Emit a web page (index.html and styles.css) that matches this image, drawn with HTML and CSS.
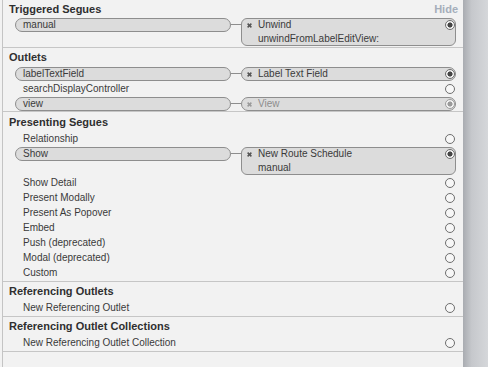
FILE: index.html
```html
<!DOCTYPE html>
<html lang="en">
<head>
    <meta charset="utf-8" />
    <link rel="stylesheet" href="styles.css">
    <title>Connections Inspector</title>
</head>
<body>
    <div class="inspector">
        <div class="panel">

            <section class="group group-triggered">
                <div class="group-head"><span>Triggered Segues</span><span class="hide">Hide</span></div>
                <div class="row row-double">
                    <span class="pill">manual</span><span class="wire"></span>
                    <div class="target target-double">
                        <div class="target-line"><svg class="x" width="5" height="5" viewBox="0 0 5 5"><path d="M0.6 0.6L4.4 4.4M4.4 0.6L0.6 4.4"/></svg><span class="target-name">Unwind</span><span class="radio on"></span></div>
                        <div class="target-sub">unwindFromLabelEditView:</div>
                    </div>
                </div>
            </section>

            <section class="group group-outlets">
                <div class="group-head"><span>Outlets</span></div>
                <div class="row row-linked">
                    <span class="pill">labelTextField</span><span class="wire"></span>
                    <div class="target"><div class="target-line"><svg class="x" width="5" height="5" viewBox="0 0 5 5"><path d="M0.6 0.6L4.4 4.4M4.4 0.6L0.6 4.4"/></svg><span class="target-name">Label Text Field</span><span class="radio on"></span></div></div>
                </div>
                <div class="row"><span class="name">searchDisplayController</span><span class="radio"></span></div>
                <div class="row row-linked">
                    <span class="pill">view</span><span class="wire"></span>
                    <div class="target dim"><div class="target-line"><svg class="x" width="5" height="5" viewBox="0 0 5 5"><path d="M0.6 0.6L4.4 4.4M4.4 0.6L0.6 4.4"/></svg><span class="target-name">View</span><span class="radio on"></span></div></div>
                </div>
            </section>

            <section class="group group-presenting">
                <div class="group-head"><span>Presenting Segues</span></div>
                <div class="row"><span class="name">Relationship</span><span class="radio"></span></div>
                <div class="row row-double">
                    <span class="pill">Show</span><span class="wire"></span>
                    <div class="target target-double">
                        <div class="target-line"><svg class="x" width="5" height="5" viewBox="0 0 5 5"><path d="M0.6 0.6L4.4 4.4M4.4 0.6L0.6 4.4"/></svg><span class="target-name">New Route Schedule</span><span class="radio on"></span></div>
                        <div class="target-sub">manual</div>
                    </div>
                </div>
                <div class="row"><span class="name">Show Detail</span><span class="radio"></span></div>
                <div class="row"><span class="name">Present Modally</span><span class="radio"></span></div>
                <div class="row"><span class="name">Present As Popover</span><span class="radio"></span></div>
                <div class="row"><span class="name">Embed</span><span class="radio"></span></div>
                <div class="row"><span class="name">Push (deprecated)</span><span class="radio"></span></div>
                <div class="row"><span class="name">Modal (deprecated)</span><span class="radio"></span></div>
                <div class="row"><span class="name">Custom</span><span class="radio"></span></div>
            </section>

            <section class="group">
                <div class="group-head"><span>Referencing Outlets</span></div>
                <div class="row"><span class="name">New Referencing Outlet</span><span class="radio"></span></div>
            </section>

            <section class="group">
                <div class="group-head"><span>Referencing Outlet Collections</span></div>
                <div class="row"><span class="name">New Referencing Outlet Collection</span><span class="radio"></span></div>
            </section>

        </div>
        <div class="strip"></div>
    </div>
</body>
</html>
```

FILE: styles.css
```css
body {
    margin: 0;
    background-color: #f2f2f2;
    font-family: 'Liberation Sans', Arial, sans-serif;
    color: #3a3a3a;
}

.inspector {
    display: flex;
    height: 367px;
}

.panel {
    width: 460px;
    margin-left: 2px;
    border-left: 1px solid #c4c4c4;
    background-color: #f2f2f2;
}

.strip {
    flex: 1;
    background: linear-gradient(to right, #a9acb1, #c6c8cc 35%, #d5d7da);
}

/* sections */
.group {
    padding: 2px 0 1px;
    border-bottom: 1px solid #c6c6c6;
}

.group-outlets { padding-bottom: 0; }
.group-presenting { padding-top: 3px; }

.group-head {
    display: flex;
    justify-content: space-between;
    height: 13px;
    line-height: 15px;
    padding: 0 5px 0 6px;
    margin-bottom: 3px;
    font-size: 11px;
    font-weight: bold;
    color: #2f2f2f;
}

.group-triggered .group-head { margin-bottom: 2px; }

.hide {
    color: #a5aebb;
}

/* rows */
.row {
    display: grid;
    grid-template-columns: 12px 216px 10px 215px;
    align-items: center;
    height: 15px;
    font-size: 10px;
}

.row-linked,
.row-double {
    align-items: start;
    padding-top: 1px;
    box-sizing: border-box;
}

.row-double { height: 29px; }

.name {
    grid-column: 2;
    padding-left: 8px;
    line-height: 16px;
    white-space: nowrap;
}

.row > .radio {
    grid-column: 4;
    justify-self: end;
    margin-right: 1px;
}

.pill {
    grid-column: 2;
    height: 14px;
    box-sizing: border-box;
    border: 1px solid #8e8e8e;
    border-radius: 7px;
    background-color: #dcdcdc;
    padding-left: 7px;
    line-height: 12px;
    white-space: nowrap;
}

.wire {
    grid-column: 3;
    height: 1px;
    margin-top: 6px;
    background-color: #8e8e8e;
}

.target {
    grid-column: 4;
    height: 14px;
    box-sizing: border-box;
    border: 1px solid #8e8e8e;
    border-radius: 7px;
    background-color: #dcdcdc;
    padding-left: 5px;
}

.target-double {
    height: 28px;
    border-radius: 6px;
}

.target-line {
    display: flex;
    align-items: center;
    height: 12px;
    line-height: 12px;
}

.target-name {
    flex: 1;
    white-space: nowrap;
}

.target-sub {
    padding: 1px 0 0 11px;
    line-height: 13px;
}

.x {
    flex: none;
    margin-right: 6px;
    stroke: #555555;
    stroke-width: 1.5;
}

.dim .target-name { color: #8d8d8d; }
.dim .x { stroke: #9a9a9a; }

/* radio buttons */
.radio {
    flex: none;
    width: 10px;
    height: 10px;
    box-sizing: border-box;
    border: 1px solid #6e6e6e;
    border-radius: 50%;
    background-color: #f7f7f7;
}

.target .radio { margin-right: 0; }

.radio.on {
    background: radial-gradient(circle, #454545 0, #454545 2.2px, #f4f4f4 2.9px);
}

.dim .radio {
    border-color: #9c9c9c;
    background: radial-gradient(circle, #9a9a9a 0, #9a9a9a 2.2px, #f4f4f4 2.9px);
}
```
